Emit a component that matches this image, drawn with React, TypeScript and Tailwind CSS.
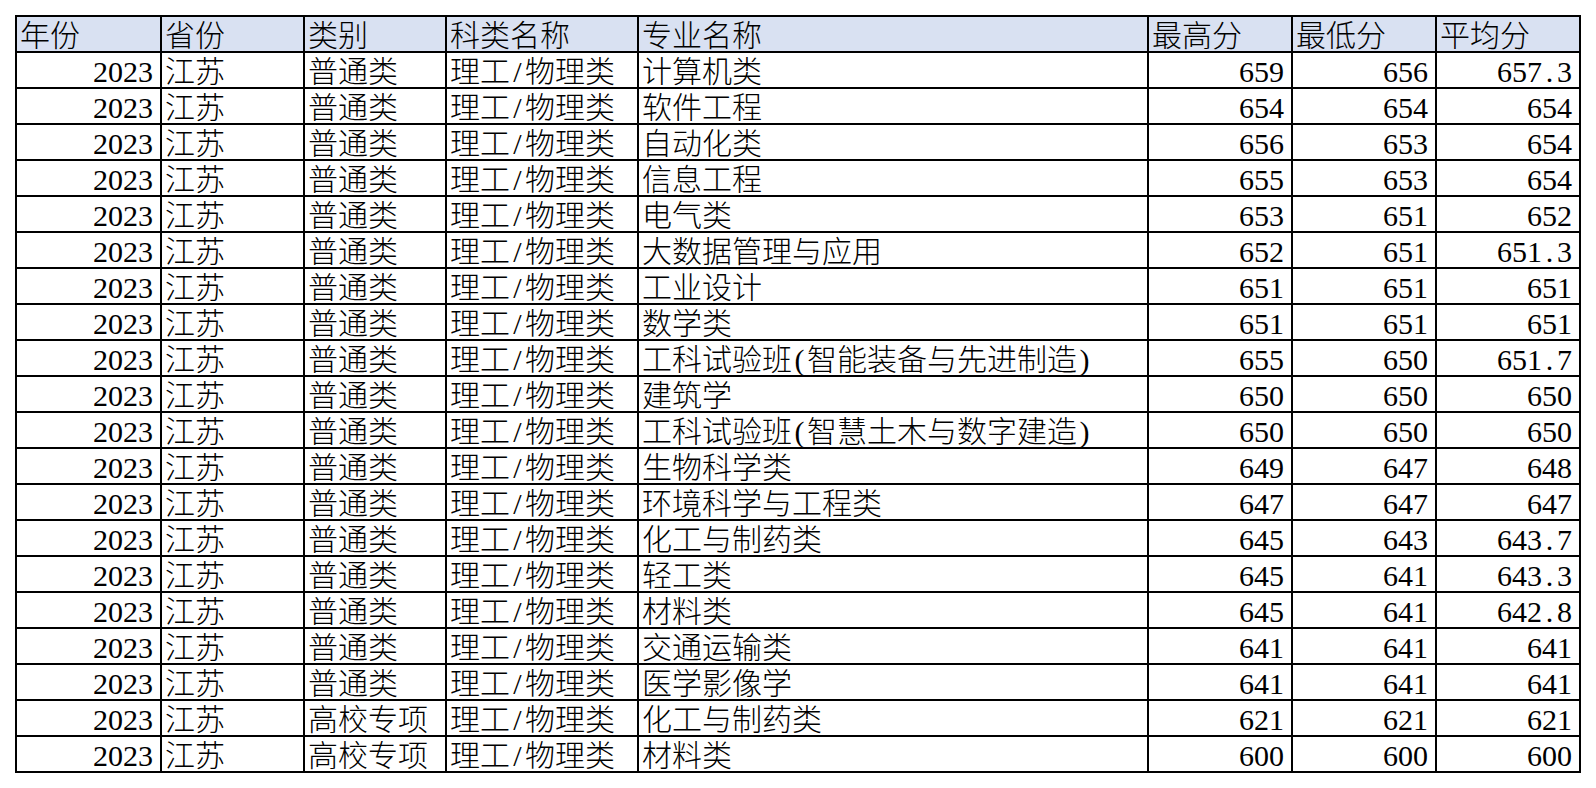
const headers = ["年份", "省份", "类别", "科类名称", "专业名称", "最高分", "最低分", "平均分"]

type Row = { cat: string; major: string; max: string; min: string; avg: string }

const rows: Row[] = [
  { cat: "普通类", major: "计算机类", max: "659", min: "656", avg: "657.3" },
  { cat: "普通类", major: "软件工程", max: "654", min: "654", avg: "654" },
  { cat: "普通类", major: "自动化类", max: "656", min: "653", avg: "654" },
  { cat: "普通类", major: "信息工程", max: "655", min: "653", avg: "654" },
  { cat: "普通类", major: "电气类", max: "653", min: "651", avg: "652" },
  { cat: "普通类", major: "大数据管理与应用", max: "652", min: "651", avg: "651.3" },
  { cat: "普通类", major: "工业设计", max: "651", min: "651", avg: "651" },
  { cat: "普通类", major: "数学类", max: "651", min: "651", avg: "651" },
  { cat: "普通类", major: "工科试验班(智能装备与先进制造)", max: "655", min: "650", avg: "651.7" },
  { cat: "普通类", major: "建筑学", max: "650", min: "650", avg: "650" },
  { cat: "普通类", major: "工科试验班(智慧土木与数字建造)", max: "650", min: "650", avg: "650" },
  { cat: "普通类", major: "生物科学类", max: "649", min: "647", avg: "648" },
  { cat: "普通类", major: "环境科学与工程类", max: "647", min: "647", avg: "647" },
  { cat: "普通类", major: "化工与制药类", max: "645", min: "643", avg: "643.7" },
  { cat: "普通类", major: "轻工类", max: "645", min: "641", avg: "643.3" },
  { cat: "普通类", major: "材料类", max: "645", min: "641", avg: "642.8" },
  { cat: "普通类", major: "交通运输类", max: "641", min: "641", avg: "641" },
  { cat: "普通类", major: "医学影像学", max: "641", min: "641", avg: "641" },
  { cat: "高校专项", major: "化工与制药类", max: "621", min: "621", avg: "621" },
  { cat: "高校专项", major: "材料类", max: "600", min: "600", avg: "600" },
]

// half-width chars get a fixed 15px slot, like the spreadsheet's monospaced font
function Txt({ s }: { s: string }) {
  return (
    <>
      {s.split("").map((ch, i) =>
        ch.charCodeAt(0) < 128 ? (
          <span key={i} className="inline-block w-[15px] text-center">
            {ch}
          </span>
        ) : (
          <span key={i}>{ch}</span>
        )
      )}
    </>
  )
}

function Cell({ s, right, head }: { s: string; right?: boolean; head?: boolean }) {
  return (
    <div
      className={
        "h-[34px] overflow-hidden whitespace-nowrap leading-[38px] " +
        (head ? "bg-[#d9e1f2] " : "bg-white ") +
        (right ? "text-right pr-[7px]" : "text-left pl-[3px]")
      }
    >
      <Txt s={s} />
    </div>
  )
}

export default function App() {
  return (
    <div className="min-h-screen bg-white pl-[15px] pt-[15px] text-black">
      <div className="inline-grid grid-cols-[143px_141px_140px_190px_508px_142px_142px_142px] auto-rows-[34px] gap-[2px] bg-black p-[2px] font-[family-name:'Liberation_Serif','Noto_Sans_CJK_SC',serif] text-[30px] font-extralight">
        {headers.map((h) => (
          <Cell key={h} s={h} head />
        ))}
        {rows.map((r, i) => (
          <div key={i} className="contents">
            <Cell s="2023" right />
            <Cell s="江苏" />
            <Cell s={r.cat} />
            <Cell s="理工/物理类" />
            <Cell s={r.major} />
            <Cell s={r.max} right />
            <Cell s={r.min} right />
            <Cell s={r.avg} right />
          </div>
        ))}
      </div>
    </div>
  )
}
